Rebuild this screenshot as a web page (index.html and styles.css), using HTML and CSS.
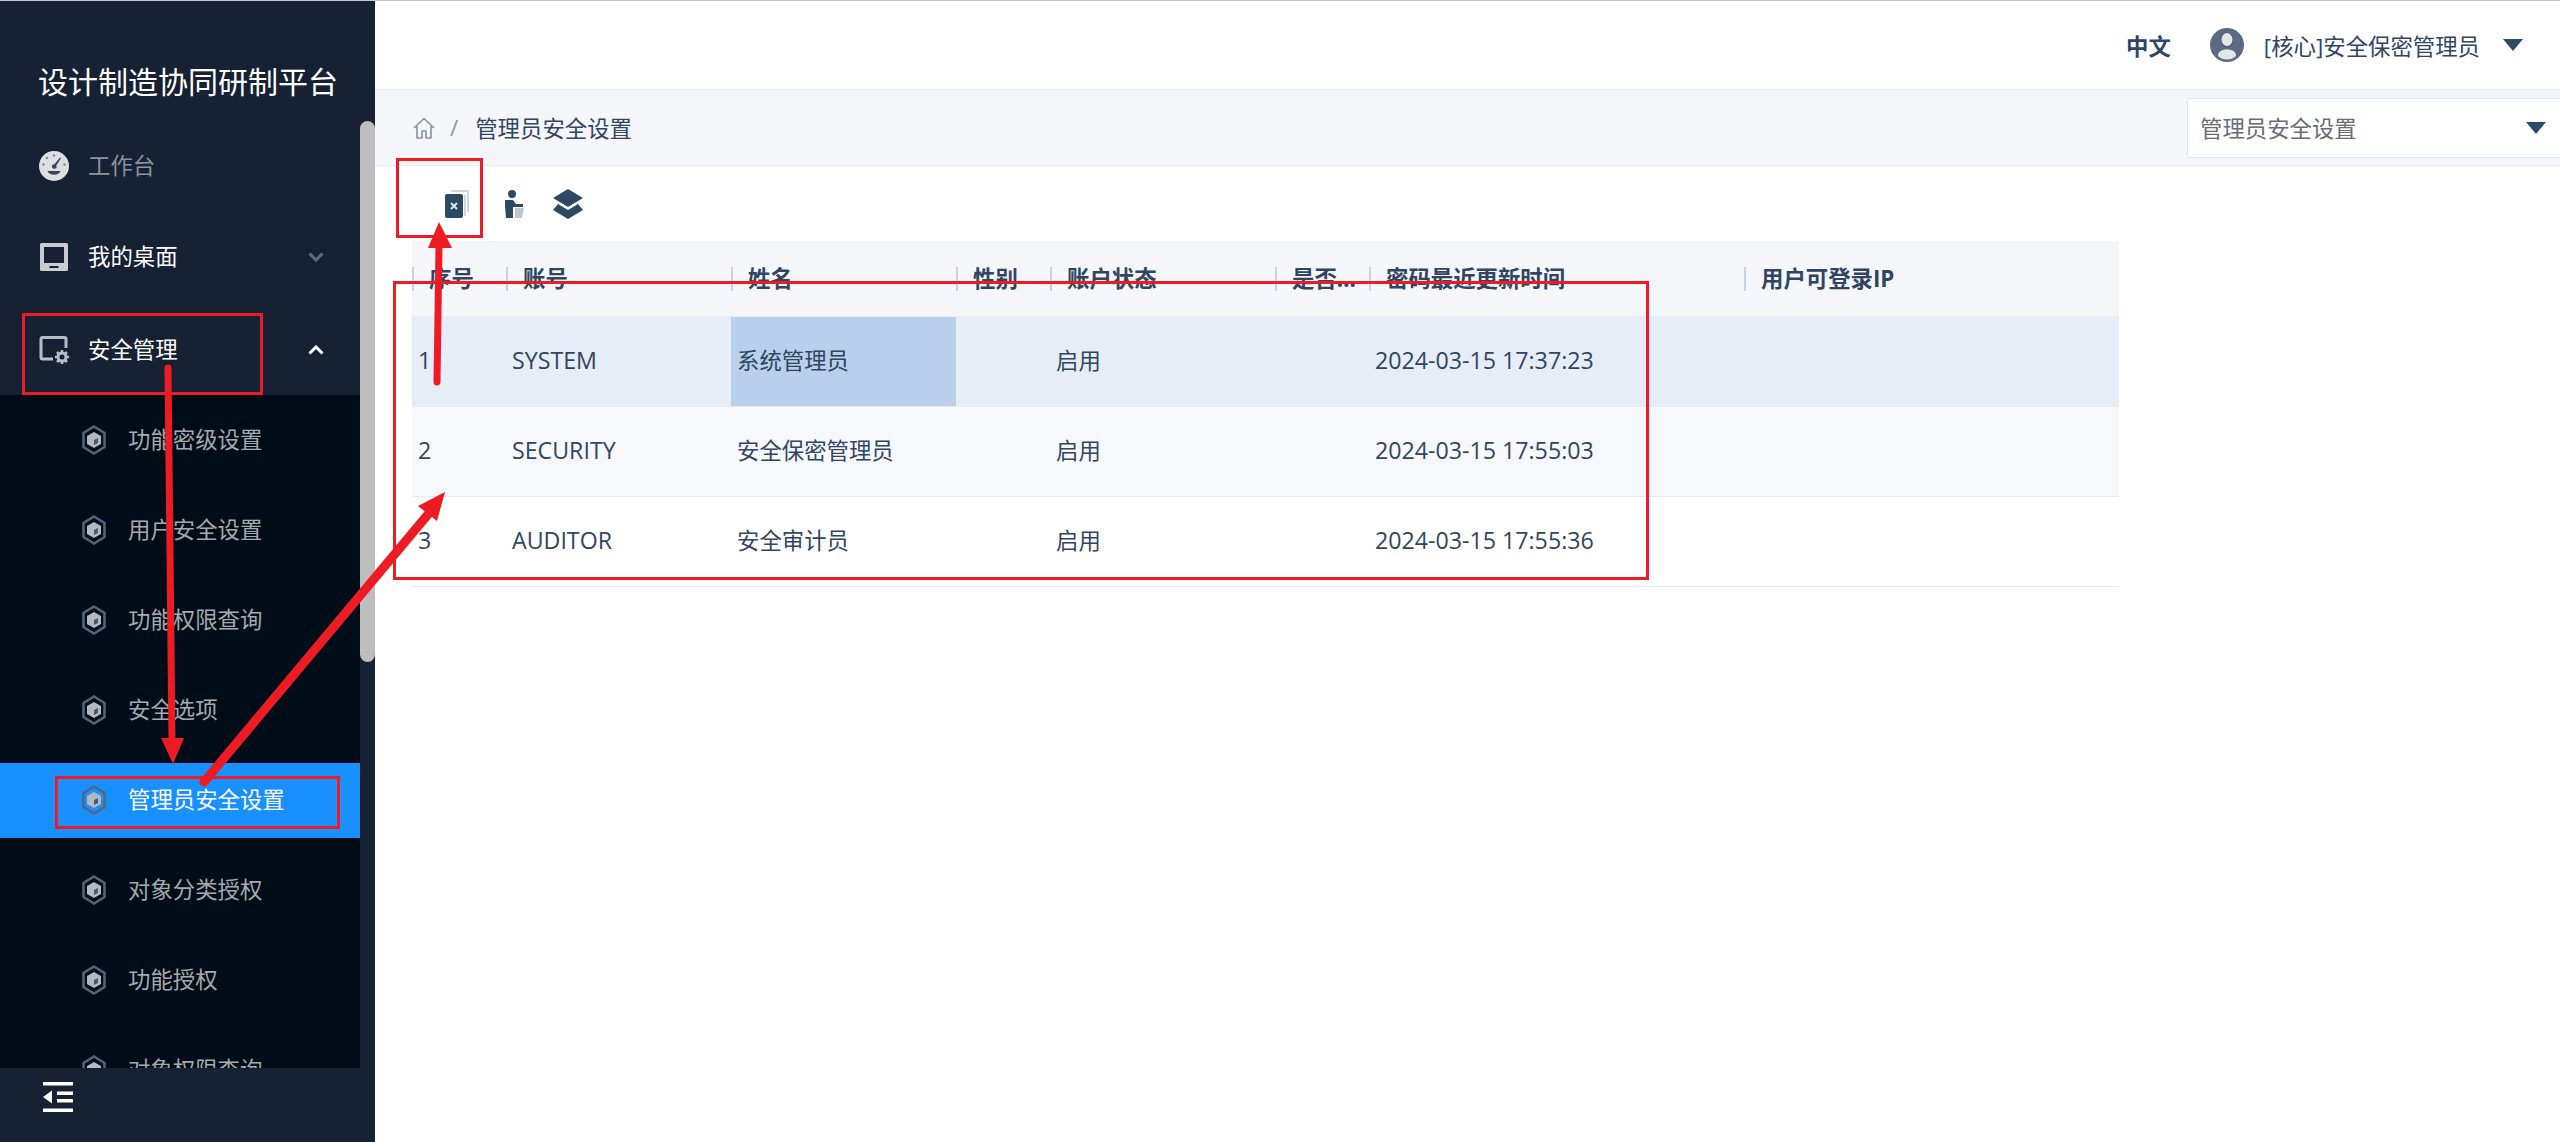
FILE: index.html
```html
<!DOCTYPE html>
<html lang="zh-CN">
<head>
<meta charset="utf-8">
<title>管理员安全设置</title>
<link rel="stylesheet" href="styles.css">
</head>
<body>
<div class="app">
  <aside class="sidebar">
    <div class="logo">设计制造协同研制平台</div>
    <div class="nav-wrap">
      <nav class="nav">
        <a class="top-item dim">
          <svg class="top-icon" viewBox="0 0 30 30"><circle cx="15" cy="15" r="15" fill="#dcdee1"/><g fill="#7f8590"><circle cx="15" cy="4.500" r="1.200"/><circle cx="8" cy="7" r="1.200"/><circle cx="4.500" cy="13.500" r="1.200"/><circle cx="25.500" cy="13.500" r="1.200"/></g><path fill="#3a4658" d="M21 6.500l1 .7-4.700 7.300a2.300 2.300 0 1 1-1.900-1.300z"/><path fill="#3a4658" d="M8.500 20h13c-1 2.600-3.400 3.800-6.500 3.800s-5.500-1.200-6.500-3.800z"/></svg>
          <span>工作台</span>
        </a>
        <a class="top-item">
          <svg class="top-icon" viewBox="0 0 30 30"><path fill="#c9ccd1" fill-rule="evenodd" d="M2.500 1h25A1.500 1.500 0 0 1 29 2.500v25a1.500 1.500 0 0 1-1.500 1.500h-25A1.500 1.500 0 0 1 1 27.500v-25A1.500 1.500 0 0 1 2.500 1zM5 5v16h20V5zM10.500 24v2h9v-2z"/></svg>
          <span>我的桌面</span>
          <svg class="chev chev-dim" viewBox="0 0 16 10"><path d="M1.500 1.500L8 8l6.500-6.500"/></svg>
        </a>
        <a class="top-item open">
          <svg class="top-icon" viewBox="0 0 30 30"><path fill="none" stroke="#b9bcc2" stroke-width="3" d="M14 24H3.500a1.500 1.500 0 0 1-1.500-1.500V4a1.500 1.500 0 0 1 1.500-1.500h22A1.500 1.500 0 0 1 27 4v9"/><circle cx="23" cy="22" r="4" fill="none" stroke="#b9bcc2" stroke-width="3"/><path stroke="#b9bcc2" stroke-width="2.500" d="M23 15v3M23 26v3M16 22h3M27 22h3M18 17l2 2M26 25l2 2M28 17l-2 2M20 25l-2 2"/></svg>
          <span>安全管理</span>
          <svg class="chev" viewBox="0 0 16 10"><path d="M1.500 8.500L8 2l6.500 6.500"/></svg>
        </a>
        <ul class="sub">
          <li class="sub-item"><svg class="hex"><use href="#hex"/></svg><span>功能密级设置</span></li>
          <li class="sub-item"><svg class="hex"><use href="#hex"/></svg><span>用户安全设置</span></li>
          <li class="sub-item"><svg class="hex"><use href="#hex"/></svg><span>功能权限查询</span></li>
          <li class="sub-item"><svg class="hex"><use href="#hex"/></svg><span>安全选项</span></li>
          <li class="sub-item active"><svg class="hex"><use href="#hex"/></svg><span>管理员安全设置</span></li>
          <li class="sub-item"><svg class="hex"><use href="#hex"/></svg><span>对象分类授权</span></li>
          <li class="sub-item"><svg class="hex"><use href="#hex"/></svg><span>功能授权</span></li>
          <li class="sub-item"><svg class="hex"><use href="#hex"/></svg><span>对象权限查询</span></li>
        </ul>
      </nav>
      <div class="scrollbar"><div class="thumb"></div></div>
    </div>
    <div class="side-foot">
      <svg class="collapse" viewBox="0 0 30 30"><path fill="#fff" d="M0 0h30v3.500H0zM14 9.500h16v3.500H14zM14 17h16v3.500H14zM0 26.500h30V30H0zM0 15l9-6.500v13z"/></svg>
    </div>
  </aside>

  <main class="main">
    <header class="topbar">
      <b class="lang">中文</b>
      <svg class="avatar" viewBox="0 0 34 34"><circle cx="17" cy="17" r="17" fill="#5b6b82"/><ellipse cx="17" cy="12" rx="6" ry="7" fill="#5b6b82" stroke="#4a5a70" stroke-width="1"/><ellipse cx="17" cy="11.500" rx="5.500" ry="6.500" fill="#e3e6ea"/><path fill="#e3e6ea" d="M8 28c0-4 3-6.500 9-6.500s9 2.500 9 6.500c-2.500 2.500-5.500 3.500-9 3.500S10.500 30.500 8 28z"/></svg>
      <span class="user">[核心]安全保密管理员</span>
      <i class="caret"></i>
    </header>

    <div class="crumbs">
      <svg class="home" viewBox="0 0 22 22"><path fill="none" stroke="#8d96a5" stroke-width="1.700" stroke-linejoin="round" d="M1 11L11 1.500 21 11M4 9v12h5v-7h4v7h5V9"/></svg>
      <span class="slash">/</span>
      <span class="crumb-text">管理员安全设置</span>
      <div class="select"><span>管理员安全设置</span><i class="caret"></i></div>
    </div>

    <div class="tools">
      <svg class="tool t-doc" viewBox="0 0 24 28"><path fill="none" stroke="#c3c9d0" stroke-width="1.500" d="M6 1h17v21"/><path fill="none" stroke="#c3c9d0" stroke-width="1.500" d="M20 5v21"/><rect x="0" y="4" width="18" height="24" rx="2" fill="#2c4a63"/><path stroke="#dfe4e8" stroke-width="2" d="M6 13l6 6M12 13l-6 6"/></svg>
      <svg class="tool t-user" viewBox="0 0 20 28"><circle cx="8" cy="4" r="4" fill="#2c4a63"/><path fill="#2c4a63" d="M1 10h8l3 4h7v3H9v11H2l-1-12z"/><path fill="#bfc6cd" d="M11 18h9l-2 10h-7z"/></svg>
      <svg class="tool t-layers" viewBox="0 0 30 30"><path fill="#2c4a63" d="M15 0l15 9-15 9L0 9z"/><path fill="#2c4a63" d="M5 15l10 6 10-6 5 6-15 9-15-9z"/></svg>
    </div>

    <table class="grid">
      <colgroup>
        <col class="c-s"><col class="c-m"><col class="c-m"><col class="c-s"><col class="c-m"><col class="c-s"><col class="c-l"><col class="c-l">
      </colgroup>
      <thead>
        <tr>
          <th><span>序号</span></th>
          <th><span>账号</span></th>
          <th><span>姓名</span></th>
          <th><span>性别</span></th>
          <th><span>账户状态</span></th>
          <th><span class="trunc">是否冻结</span></th>
          <th><span>密码最近更新时间</span></th>
          <th><span>用户可登录IP</span></th>
        </tr>
      </thead>
      <tbody>
        <tr class="r-sel">
          <td class="lat">1</td><td class="lat">SYSTEM</td><td class="cell-sel">系统管理员</td><td></td><td>启用</td><td></td><td class="lat">2024-03-15 17:37:23</td><td></td>
        </tr>
        <tr class="r-alt">
          <td class="lat">2</td><td class="lat">SECURITY</td><td>安全保密管理员</td><td></td><td>启用</td><td></td><td class="lat">2024-03-15 17:55:03</td><td></td>
        </tr>
        <tr>
          <td class="lat">3</td><td class="lat">AUDITOR</td><td>安全审计员</td><td></td><td>启用</td><td></td><td class="lat">2024-03-15 17:55:36</td><td></td>
        </tr>
      </tbody>
    </table>
  </main>
</div>

<svg class="defs">
  <symbol id="hex" viewBox="0 0 26 30">
    <path fill="none" stroke="#56647a" stroke-width="2.500" d="M13 1.500l10.500 6.500v14L13 28.500 2.500 22V8z"/>
    <path fill="#b4b8bf" d="M13 7l7 4v8l-7 4-7-4v-8z"/>
    <path fill="#4b596d" d="M13 15l4-2v5l-4 2z"/>
  </symbol>
</svg>

<svg class="marks" viewBox="0 0 2560 1142">
  <g class="mark-box">
    <rect x="23.500" y="314.500" width="238" height="79"/>
    <rect x="56.500" y="777.500" width="282" height="50"/>
    <rect x="397.500" y="159.500" width="84" height="77"/>
    <rect x="394.500" y="282.500" width="1253" height="296"/>
  </g>
  <g class="mark-line">
    <path class="w7" d="M168 368L172 740"/>
    <path class="w9" d="M204 782L430 512"/>
    <path class="w7" d="M437 382L439 246"/>
  </g>
  <g class="mark-head">
    <path d="M161 738L173 764L184 738z"/>
    <path d="M445 492L418 506L437 521z"/>
    <path d="M439 222L428 248L452 248z"/>
  </g>
</svg>
</body>
</html>
```

FILE: styles.css
```css
* { box-sizing: border-box; }
html, body { margin: 0; padding: 0; height: 100%; }
body {
  font-family: "Open Sans", "Noto Sans CJK SC", sans-serif;
  font-size: 22.4px;
  color: #2f4562;
  background: #fff;
  overflow: hidden;
}
.defs { display: none; }
.app {
  display: flex;
  height: 1142px;
  border-top: 1px solid #c6c6c6;
}

/* sidebar */
.sidebar {
  width: 375px;
  flex: none;
  display: flex;
  flex-direction: column;
  background: #162134;
  color: #fff;
}
.logo {
  height: 120px;
  flex: none;
  padding: 59px 0 0 38px;
  font-size: 30px;
  line-height: 44px;
  white-space: nowrap;
}
.nav-wrap { flex: 1; min-height: 0; display: flex; overflow: hidden; }
.nav { width: 360px; flex: none; }
.scrollbar { width: 15px; flex: none; }
.thumb { height: 541px; background: #bebebe; border-radius: 8px; }
.top-item {
  display: flex;
  align-items: center;
  height: 90px;
  padding-left: 39px;
  color: #fff;
}
.top-item span { margin-bottom: 3px; }
.top-item + .top-item { margin-top: 1px; }
.top-item.open { margin-top: 3px; }
.top-item.dim { color: #8d939d; }
.top-icon { width: 30px; height: 30px; flex: none; margin-right: 19px; }
.chev {
  width: 16px;
  height: 10px;
  margin-left: auto;
  margin-right: 36px;
  fill: none;
  stroke: #fff;
  stroke-width: 3;
}
.chev-dim { stroke: #5f6a7a; }
.sub {
  list-style: none;
  margin: 0;
  padding: 7.500px 0 0;
  background: #000c17;
  display: flex;
  flex-direction: column;
  gap: 15px;
}
.sub-item {
  display: flex;
  align-items: center;
  height: 75px;
  flex: none;
  padding-left: 81px;
  color: #a6a9ad;
}
.sub-item span { margin-bottom: 3px; }
.sub-item.active { background: #1890ff; color: #fff; }
.hex { width: 26px; height: 30px; flex: none; margin-right: 21px; }
.side-foot {
  height: 74px;
  flex: none;
  padding: 14px 0 0 43px;
  background: #162134;
}
.collapse { display: block; width: 30px; height: 30px; }

/* main */
.main { flex: 1; min-width: 0; display: flex; flex-direction: column; }
.topbar {
  height: 89px;
  flex: none;
  display: flex;
  align-items: center;
  justify-content: flex-end;
  padding-right: 37px;
  border-bottom: 1px solid #e6ebf2;
}
.lang { font-weight: 700; margin-right: 39px; }
.avatar { width: 34px; height: 34px; margin-right: 20px; }
.user { margin-right: 23px; }
.caret {
  width: 0;
  height: 0;
  border-left: 10px solid transparent;
  border-right: 10px solid transparent;
  border-top: 12px solid #2c4a63;
}
.crumbs {
  height: 76px;
  flex: none;
  display: flex;
  align-items: center;
  padding-left: 38px;
  background: #f4f6fa;
  border-bottom: 1px solid #e6ebf2;
}
.home { width: 22px; height: 22px; margin-right: 15px; }
.slash { color: #8d96a5; margin-right: 17px; }
.select {
  margin-left: auto;
  width: 373px;
  height: 60px;
  display: flex;
  align-items: center;
  justify-content: space-between;
  padding: 0 14px 0 12px;
  background: #fff;
  border: 1px solid #dfe4ec;
  border-right: 0;
  border-radius: 4px 0 0 4px;
  color: #666d78;
}
.tools {
  height: 75px;
  flex: none;
  display: flex;
  align-items: center;
  padding-left: 70px;
}
.tool { display: block; flex: none; }
.t-doc { width: 24px; height: 28px; margin-right: 35px; }
.t-user { width: 20px; height: 28px; margin-right: 29px; }
.t-layers { width: 30px; height: 30px; }

/* table */
.grid {
  width: 1706px;
  margin-left: 37px;
  table-layout: fixed;
  border-collapse: collapse;
}
.c-s { width: 94px; }
.c-m { width: 225px; }
.c-l { width: 375px; }
.grid th {
  height: 75px;
  padding: 2px 0 0;
  background: #f4f6fa;
  text-align: left;
  font-weight: 700;
  border-bottom: 1px solid #e6ebf2;
}
.grid th span {
  display: block;
  height: 24px;
  line-height: 24px;
  padding-left: 15px;
  border-left: 2px solid #c5d4e2;
  white-space: nowrap;
}
.grid th .trunc { overflow: hidden; text-overflow: ellipsis; }
.grid td {
  height: 90px;
  padding: 0 5px 3px 6px;
  border-bottom: 1px solid #e6ebf2;
  white-space: nowrap;
}
.grid td.lat { font-size: 23.2px; }
.r-sel td { background: #e7edf7; }
.r-sel td.cell-sel { background: #b9cfeb; }
.r-alt td { background: #f6f8fc; }

/* annotation overlay */
.marks {
  position: absolute;
  left: 0;
  top: 0;
  width: 2560px;
  height: 1142px;
  pointer-events: none;
}
.mark-box rect { fill: none; stroke: #ed1c24; stroke-width: 3; }
.mark-line path { fill: none; stroke: #ed1c24; stroke-linecap: round; }
.w7 { stroke-width: 7; }
.w9 { stroke-width: 9; }
.mark-head path { fill: #ed1c24; }
```
